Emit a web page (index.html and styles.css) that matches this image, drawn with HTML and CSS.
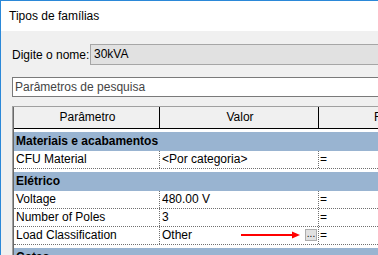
FILE: index.html
```html
<!DOCTYPE html>
<html lang="pt">
<head>
    <meta charset="UTF-8">
    <title>Tipos de famílias</title>
    <link rel="stylesheet" href="styles.css">
</head>
<body>
    <div class="window">
        <div class="titlebar">Tipos de famílias</div>
        <div class="content">
            <div class="name-row">
                <span class="name-label">Digite o nome:</span>
                <div class="name-box">30kVA</div>
            </div>
            <div class="search">Parâmetros de pesquisa</div>
            <div class="grid">
                <div class="grid-in">
                    <div class="head">
                        <div class="c1">Parâmetro</div>
                        <div class="c2">Valor</div>
                        <div class="c3">Fórmula</div>
                    </div>
                    <div class="group">Materiais e acabamentos</div>
                    <div class="row">
                        <div class="c1">CFU Material</div>
                        <div class="c2">&lt;Por categoria&gt;</div>
                        <div class="c3">=</div>
                    </div>
                    <div class="group">Elétrico</div>
                    <div class="row">
                        <div class="c1">Voltage</div>
                        <div class="c2">480.00 V</div>
                        <div class="c3">=</div>
                    </div>
                    <div class="row">
                        <div class="c1">Number of Poles</div>
                        <div class="c2">3</div>
                        <div class="c3">=</div>
                    </div>
                    <div class="row">
                        <div class="c1">Load Classification</div>
                        <div class="c2 with-btn">
                            <span>Other</span>
                            <!-- arrow drawn over the cell -->
                            <svg class="arrow" width="60" height="10" viewBox="0 0 60 10">
                                <line x1="0" y1="5" x2="53" y2="5" stroke="#ff0000" stroke-width="2"/>
                                <polygon points="51,1.5 59,5 51,8.5" fill="#ff0000"/>
                            </svg>
                            <span class="dots-btn">...</span>
                        </div>
                        <div class="c3">=</div>
                    </div>
                    <div class="group">Cotas</div>
                </div>
            </div>
        </div>
    </div>
</body>
</html>
```

FILE: styles.css
```css
* { margin: 0; padding: 0; box-sizing: border-box; }
body { font-family: "Liberation Sans", Arial, sans-serif; font-size: 12px; color: #000; width: 378px; height: 255px; overflow: hidden; background: #f0f0f0; }
.window { height: 255px; border-top: 1px solid #2b88d8; border-left: 1px solid #2b88d8; background: #f0f0f0; overflow: hidden; white-space: nowrap; }
.titlebar { height: 30px; line-height: 30px; background: #fff; padding-left: 8px; }
.content { padding: 13px 0 0 11px; }
.name-row { display: flex; align-items: center; height: 21px; }
.name-label { width: 78px; }
.name-box { flex: 1; height: 21px; line-height: 19px; padding-left: 3px; background: #e1e1e1; border: 1px solid #a6a6a6; border-right: none; }
.search { margin-top: 12px; height: 20px; line-height: 18px; padding-left: 2px; background: #fff; border: 1px solid #7a7a7a; border-right: none; color: #444; }
.grid { margin-top: 9px; background: #fff; border-top: 1px solid #a0a0a0; border-left: 1px solid #a0a0a0; }
.grid-in { border-left: 1px solid #696969; }
.head { display: flex; height: 22px; line-height: 21px; background: #f0f0f0; border-bottom: 1px solid #000; }
.head .c1, .head .c2 { border-right: 1px solid #000; text-align: center; }
.head .c3 { padding-left: 55px; }
.c1 { width: 146px; flex-shrink: 0; padding-left: 2px; }
.c2 { width: 159px; flex-shrink: 0; padding-left: 2px; }
.c3 { flex: 1; padding-left: 1px; }
.group { margin-top: 3px; height: 19px; line-height: 19px; padding-left: 2px; background: #99b4d1; font-weight: bold; }
.row { display: flex; height: 18px; line-height: 17px; border-bottom: 1px dotted #707070; }
.row .c1, .row .c2 { border-right: 1px dotted #707070; }
.with-btn { position: relative; display: flex; justify-content: space-between; align-items: flex-start; }
.arrow { position: absolute; left: 81px; top: 3px; }
.dots-btn { width: 12px; height: 12px; margin-top: 2px; margin-right: 1px; border: 1px solid #adadad; background: #e1e1e1; font-size: 10px; line-height: 8px; text-align: center; color: #000; }
```
